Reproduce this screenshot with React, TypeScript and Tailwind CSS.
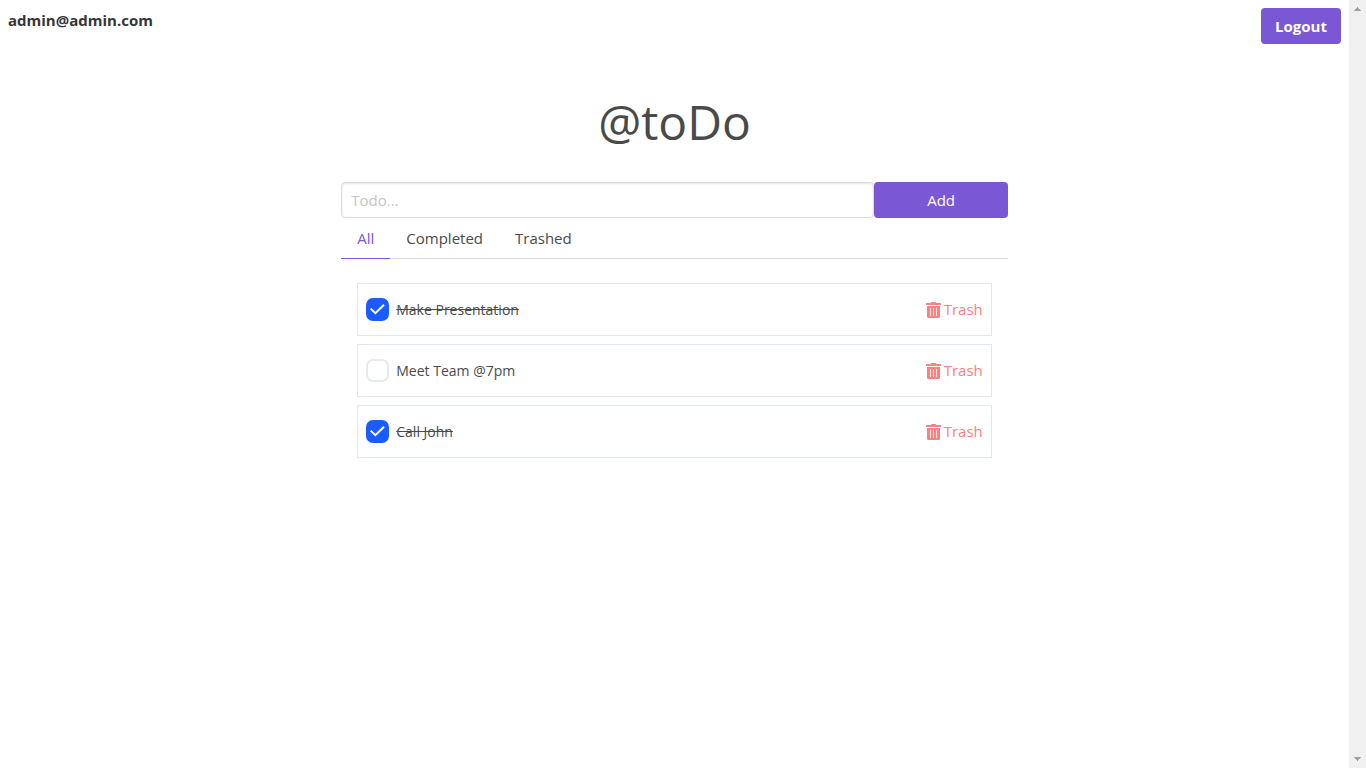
import { useState } from "react";

type Todo = { id: number; text: string; done: boolean; trashed: boolean };
type Tab = "All" | "Completed" | "Trashed";

const tabs: Tab[] = ["All", "Completed", "Trashed"];

const initialTodos: Todo[] = [
  { id: 1, text: "Make Presentation", done: true, trashed: false },
  { id: 2, text: "Meet Team @7pm", done: false, trashed: false },
  { id: 3, text: "Call John", done: true, trashed: false },
];

function TrashIcon() {
  return (
    <svg width="15" height="16" viewBox="0 0 15 16" fill="currentColor" aria-hidden="true">
      <path d="M0.5 1H4.6L5.2 0.3Q5.4 0 5.8 0H9.2Q9.6 0 9.8 0.3L10.4 1H14.5Q15 1 15 1.5V2.5Q15 3 14.5 3H0.5Q0 3 0 2.5V1.5Q0 1 0.5 1Z" />
      <path
        fillRule="evenodd"
        d="M1 4H14V14.5Q14 16 12.5 16H2.5Q1 16 1 14.5ZM4 6V14H4.8V6ZM7.1 6V14H7.9V6ZM10.2 6V14H11V6Z"
      />
    </svg>
  );
}

function TodoRow({ todo, onToggle, onTrash }: { todo: Todo; onToggle: () => void; onTrash: () => void }) {
  return (
    <li className="flex items-center justify-between border border-[#e2e8f0] px-2 py-3">
      <label className="flex items-center gap-[7px] text-sm">
        <span className="grid size-[23px] place-items-center">
          <input
            type="checkbox"
            checked={todo.done}
            onChange={onToggle}
            className="col-start-1 row-start-1 size-[23px] appearance-none rounded-[7px] border-2 border-[#e8ebeb] bg-white checked:border-[#1a5cff] checked:bg-[#1a5cff]"
          />
          {todo.done && (
            <svg viewBox="0 0 23 23" className="pointer-events-none col-start-1 row-start-1 size-[23px]" fill="none" aria-hidden="true">
              <path d="M4.6 10.6 L9.4 15.2 L18 6.8" stroke="white" strokeWidth="2" />
            </svg>
          )}
        </span>
        <span className={todo.done ? "line-through" : ""}>{todo.text}</span>
      </label>
      <button type="button" onClick={onTrash} className="flex items-center gap-[3px] text-[15px] leading-[27px] text-[#fc8181]">
        <TrashIcon />
        Trash
      </button>
    </li>
  );
}

function ScrollTrack() {
  return (
    <div className="sticky top-0 flex h-screen w-[17px] shrink-0 flex-col items-center justify-between bg-[#f0f0f0] py-[7px]" aria-hidden="true">
      <svg width="9" height="4" viewBox="0 0 9 4" fill="#a3a3a3" shapeRendering="crispEdges">
        <path d="M4 0h1v1h1v1h1v1h1v1H1V3h1V2h1V1h1z" />
      </svg>
      <svg width="9" height="4" viewBox="0 0 9 4" fill="#a3a3a3" shapeRendering="crispEdges">
        <path d="M1 0h7v1H7v1H6v1H5v1H4V3H3V2H2V1H1z" />
      </svg>
    </div>
  );
}

export default function App() {
  const [todos, setTodos] = useState(initialTodos);
  const [tab, setTab] = useState<Tab>("All");
  const [draft, setDraft] = useState("");

  const update = (id: number, change: Partial<Todo>) =>
    setTodos(todos.map((t) => (t.id === id ? { ...t, ...change } : t)));

  const shown = todos.filter((t) =>
    tab === "Trashed" ? t.trashed : !t.trashed && (tab === "All" || t.done)
  );

  return (
    <div className="flex min-h-screen bg-white font-['Open_Sans','Noto_Sans',sans-serif] text-[15px] leading-6 text-[#4a4a4a]">
      <div className="min-w-0 flex-1 px-2">
        <header className="flex items-start justify-between pt-2">
          <strong className="font-bold text-[#363636]">admin@admin.com</strong>
          <button type="button" className="h-9 w-20 rounded bg-[#7957d5] font-bold text-white">
            Logout
          </button>
        </header>

        <main className="mx-auto w-1/2 pt-[42px]">
          <h1 className="text-center text-5xl leading-[72px]">@toDo</h1>

          <form
            className="mt-6 flex"
            onSubmit={(e) => {
              e.preventDefault();
              if (!draft.trim()) return;
              setTodos([...todos, { id: Date.now(), text: draft, done: false, trashed: false }]);
              setDraft("");
            }}
          >
            <input
              aria-label="Todo"
              placeholder="Todo..."
              value={draft}
              onChange={(e) => setDraft(e.target.value)}
              className="h-9 w-4/5 rounded border border-[#dbdbdb] bg-white px-[9px] text-[#363636] shadow-[inset_0_1px_2px_rgba(10,10,10,0.1)] placeholder:text-[#c5c5c5]"
            />
            <button type="submit" className="h-9 w-1/5 rounded bg-[#7957d5] text-white">
              Add
            </button>
          </form>

          <nav className="flex border-b border-[#dbdbdb]">
            {tabs.map((name) => (
              <a
                key={name}
                href={`#${name.toLowerCase()}`}
                onClick={() => setTab(name)}
                className={
                  name === tab
                    ? "-mb-px border-b border-[#7957d5] px-4 py-2 text-[#7957d5]"
                    : "-mb-px border-b border-[#dbdbdb] px-4 py-2"
                }
              >
                {name}
              </a>
            ))}
          </nav>

          <ul className="flex flex-col gap-2 px-4 pt-6">
            {shown.map((todo) => (
              <TodoRow
                key={todo.id}
                todo={todo}
                onToggle={() => update(todo.id, { done: !todo.done })}
                onTrash={() => update(todo.id, { trashed: true })}
              />
            ))}
          </ul>
        </main>
      </div>
      <ScrollTrack />
    </div>
  );
}
